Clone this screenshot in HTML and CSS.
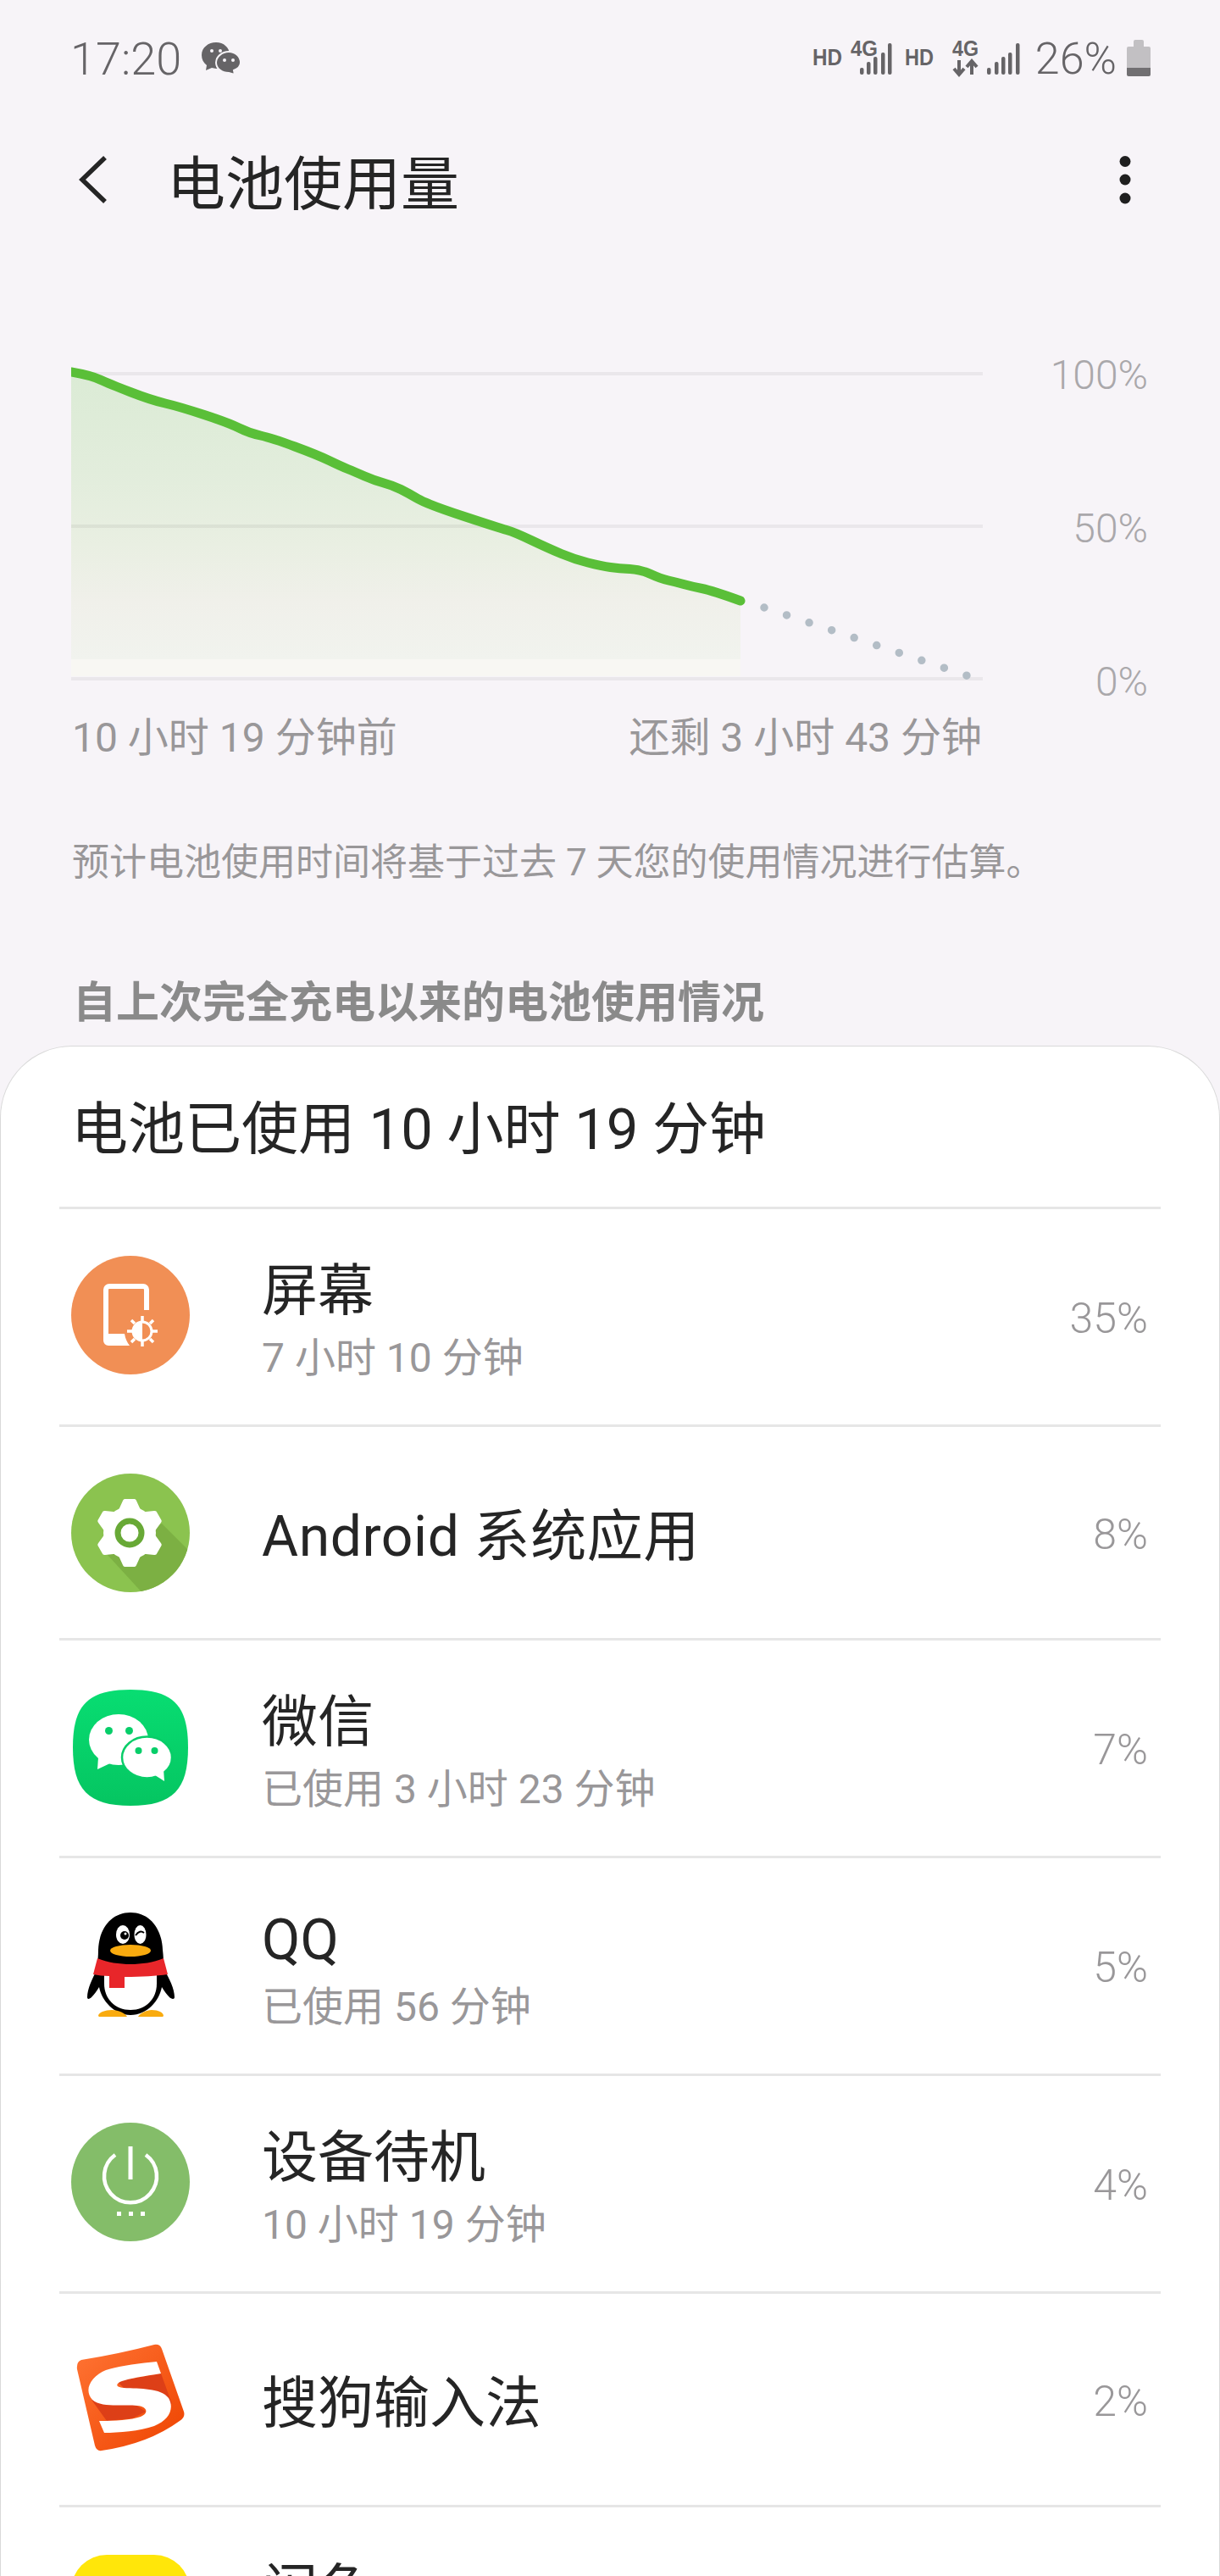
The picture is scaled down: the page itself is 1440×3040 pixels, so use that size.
FILE: index.html
```html
<!DOCTYPE html>
<html lang="zh-CN">
<head>
    <meta charset="utf-8">
    <meta name="viewport" content="width=device-width, initial-scale=1.0">
    <title>电池使用量</title>
    <link rel="stylesheet" href="styles.css">
</head>
<body>

<div class="screen">

    <div class="status">
        <span class="time">17:20</span>
        <svg class="status-wechat" viewBox="0 0 47 38">
            <path class="glyph" d="M17 0C8 0 0 6 0 15c0 5 2 9 6 12l-1 6 7-3 5 1C26 31 33 24 33 15 33 6 26 0 17 0Z"/>
            <path class="glyph" stroke="#f7f4f8" stroke-width="2" d="M32 11c-8 0-15 6-15 13s7 12 15 12l7 2-1-5c5-2 8-5 8-9 0-7-6-13-14-13Z"/>
            <circle class="eye" cx="12" cy="10" r="2"/><circle class="eye" cx="22" cy="10" r="2"/>
            <circle class="eye" cx="27" cy="21" r="2"/><circle class="eye" cx="37" cy="21" r="2"/>
        </svg>
        <svg class="net" viewBox="955 36 252 56">
            <text class="net-hd" x="959" y="77" textLength="35" lengthAdjust="spacingAndGlyphs">HD</text>
            <text class="net-4g" x="1004" y="66" textLength="32" lengthAdjust="spacingAndGlyphs">4G</text>
            <g class="bars">
                <rect x="1015" y="80" width="4.5" height="8" rx="2"/>
                <rect x="1023" y="73" width="4.5" height="15" rx="2"/>
                <rect x="1031" y="67" width="4.5" height="21" rx="2"/>
                <rect x="1040" y="62" width="4.5" height="26" rx="2"/>
                <rect x="1048" y="51" width="4.5" height="37" rx="2"/>
            </g>
            <text class="net-hd" x="1068" y="77" textLength="34" lengthAdjust="spacingAndGlyphs">HD</text>
            <text class="net-4g" x="1124" y="66" textLength="31" lengthAdjust="spacingAndGlyphs">4G</text>
            <path class="arrows" d="M1132 71V87M1126 81l6 7 6-7M1147 88V73M1141 79l6-7 6 7"/>
            <g class="bars">
                <rect x="1165" y="80" width="4.5" height="8" rx="2"/>
                <rect x="1174" y="73" width="4.5" height="15" rx="2"/>
                <rect x="1182" y="67" width="4.5" height="21" rx="2"/>
                <rect x="1190" y="62" width="4.5" height="26" rx="2"/>
                <rect x="1199" y="51" width="4.5" height="37" rx="2"/>
            </g>
        </svg>
        <span class="level">26%</span>
        <svg class="battery" viewBox="0 0 28 43">
            <path fill="#c2c0c3" d="M8 2a2 2 0 0 1 2-2h8a2 2 0 0 1 2 2v6h6a2 2 0 0 1 2 2v24H0V10a2 2 0 0 1 2-2h6Z"/>
            <path fill="#716f72" d="M0 33h28v8a2 2 0 0 1-2 2H2a2 2 0 0 1-2-2Z"/>
        </svg>
    </div>

    <div class="toolbar">
        <svg class="back" viewBox="0 0 36 58"><path d="M32 3 5 29l27 26"/></svg>
        <h1 class="page-title">电池使用量</h1>
        <svg class="more" viewBox="0 0 14 57">
            <ellipse cx="7" cy="6.500" rx="6.500" ry="6.500"/>
            <ellipse cx="7" cy="28" rx="6.500" ry="6.500"/>
            <ellipse cx="7" cy="50" rx="6.500" ry="6.500"/>
        </svg>
    </div>

    <div class="chart">
        <svg class="chart-plot" viewBox="84 420 1076 400">
            <defs>
                <linearGradient id="chartFill" gradientUnits="userSpaceOnUse" x1="0" y1="439" x2="0" y2="778">
                    <stop offset="0" stop-color="#dbebd5"/>
                    <stop offset="0.35" stop-color="#e2eddc"/>
                    <stop offset="0.6" stop-color="#e9efe2"/>
                    <stop offset="0.8" stop-color="#f0f0ea"/>
                    <stop offset="1" stop-color="#f1f3ee"/>
                </linearGradient>
            </defs>
            <rect x="84" y="778" width="790" height="20" fill="#f8f7f3"/>
            <path fill="url(#chartFill)" d="M84 439Q107 443 118 448Q129 453 153.500 462.500Q178 472 195 476Q212 480 241 489.500Q270 499 282 505Q294 511 307.500 514Q321 517 348 527Q375 537 388.500 543.500Q402 550 410.500 553.500Q419 557 430.500 562Q442 567 453 570Q464 573 473 577.500Q482 582 493 588.500Q504 595 546.500 609Q589 623 598 625.500Q607 628 627 637.500Q647 647 662.500 653.500Q678 660 694 664Q710 668 720.500 669.500Q731 671 743.500 671.500Q756 672 768 677.500Q780 683 789 685Q798 687 807 689.500Q816 692 828.500 694.500Q841 697 874 709V778H84Z"/>
            <path class="grid" d="M84 441H1160M84 621H1160M84 801H1160"/>
            <path class="forecast" d="M902 717L1142 797.500"/>
            <path class="usage" d="M84 439Q107 443 118 448Q129 453 153.500 462.500Q178 472 195 476Q212 480 241 489.500Q270 499 282 505Q294 511 307.500 514Q321 517 348 527Q375 537 388.500 543.500Q402 550 410.500 553.500Q419 557 430.500 562Q442 567 453 570Q464 573 473 577.500Q482 582 493 588.500Q504 595 546.500 609Q589 623 598 625.500Q607 628 627 637.500Q647 647 662.500 653.500Q678 660 694 664Q710 668 720.500 669.500Q731 671 743.500 671.500Q756 672 768 677.500Q780 683 789 685Q798 687 807 689.500Q816 692 828.500 694.500Q841 697 874 709"/>
        </svg>
        <div class="chart-scale">
            <span>100%</span>
            <span>50%</span>
            <span>0%</span>
        </div>
    </div>

    <div class="chart-times">
        <span>10 小时 19 分钟前</span>
        <span>还剩 3 小时 43 分钟</span>
    </div>

    <p class="note">预计电池使用时间将基于过去 7 天您的使用情况进行估算。</p>
    <h2 class="section-title">自上次完全充电以来的电池使用情况</h2>

    <div class="card">
        <div class="card-title">电池已使用 10 小时 19 分钟</div>

        <div class="row">
            <svg class="app-icon" viewBox="0 0 140 140">
                <circle cx="70" cy="70" r="70" fill="#f18f55"/>
                <path fill="none" stroke="#fff" stroke-width="6" d="M89 64V40a4 4 0 0 0-4-4H45a4 4 0 0 0-4 4v60"/>
                <path fill="#fff" d="M38 92h25c1 6 3 10 6 14H44a6 6 0 0 1-6-6Z"/>
                <circle cx="84" cy="89" r="11" fill="none" stroke="#fff" stroke-width="3"/>
                <path fill="#fff" d="M84 78a11 11 0 0 0 0 22Z"/>
                <path fill="none" stroke="#fff" stroke-width="3.500" d="M84 71v6M84 101v6M66 89h6M96 89h6M71 76l4 4M93 98l4 4M97 76l-4 4M75 98l-4 4"/>
            </svg>
            <div class="row-text">
                <div class="row-title">屏幕</div>
                <div class="row-sub">7 小时 10 分钟</div>
            </div>
            <span class="row-pct">35%</span>
        </div>

        <div class="row row-single">
            <svg class="app-icon" viewBox="0 -3 140 140">
                <defs><clipPath id="gearClip"><circle cx="70" cy="70" r="70"/></clipPath></defs>
                <circle cx="70" cy="70" r="70" fill="#8bc34f"/>
                <polygon clip-path="url(#gearClip)" fill="#7cb043" points="42,95 107,59 150,102 97,155"/>
                <g transform="translate(69 70)" fill="#fff">
                    <circle r="31"/>
                    <path d="M-13-27-8-38a3 3 0 0 1 2-2H6a3 3 0 0 1 2 2L13-27Z"/>
                    <path transform="rotate(60)" d="M-13-27-8-38a3 3 0 0 1 2-2H6a3 3 0 0 1 2 2L13-27Z"/>
                    <path transform="rotate(120)" d="M-13-27-8-38a3 3 0 0 1 2-2H6a3 3 0 0 1 2 2L13-27Z"/>
                    <path transform="rotate(180)" d="M-13-27-8-38a3 3 0 0 1 2-2H6a3 3 0 0 1 2 2L13-27Z"/>
                    <path transform="rotate(240)" d="M-13-27-8-38a3 3 0 0 1 2-2H6a3 3 0 0 1 2 2L13-27Z"/>
                    <path transform="rotate(300)" d="M-13-27-8-38a3 3 0 0 1 2-2H6a3 3 0 0 1 2 2L13-27Z"/>
                    <circle r="14" fill="none" stroke="#68a936" stroke-width="7"/>
                </g>
            </svg>
            <div class="row-text">
                <div class="row-title row-title-latin">Android 系统应用</div>
            </div>
            <span class="row-pct">8%</span>
        </div>

        <div class="row">
            <svg class="app-icon" viewBox="-2 -3 140 140">
                <defs>
                    <linearGradient id="wechatBg" x1="0" y1="0" x2="0" y2="1">
                        <stop offset="0" stop-color="#08dd72"/>
                        <stop offset="1" stop-color="#05c561"/>
                    </linearGradient>
                </defs>
                <path fill="url(#wechatBg)" d="M68 0C118 0 136 18 136 68 136 118 118 137 68 137 18 137 0 118 0 68 0 18 18 0 68 0Z"/>
                <ellipse cx="54" cy="59" rx="35" ry="30" fill="#fff"/>
                <path fill="#fff" d="M30 80l-1 14 17-8Z"/>
                <circle cx="42.500" cy="48.500" r="4.500" fill="#07ce69"/>
                <circle cx="66.500" cy="48.500" r="4.500" fill="#07ce69"/>
                <ellipse cx="87.500" cy="80" rx="29.500" ry="24.500" fill="#fff" stroke="#07cd68" stroke-width="2.500"/>
                <path fill="#fff" d="M97 101l11 7-1-14Z"/>
                <circle cx="77.500" cy="72" r="4" fill="#07ce69"/>
                <circle cx="96.500" cy="72" r="4" fill="#07ce69"/>
            </svg>
            <div class="row-text">
                <div class="row-title">微信</div>
                <div class="row-sub">已使用 3 小时 23 分钟</div>
            </div>
            <span class="row-pct">7%</span>
        </div>

        <div class="row">
            <svg class="app-icon" viewBox="-18 -9 140 140">
                <path fill="#000" d="M52 0C30 0 15 18 14 44c0 8-1 14-1 22C7 78 1 90 1 100c0 3 3 2 5 0 3-3 6-7 9-12 3 16 18 33 37 33 20 0 34-17 37-33 3 5 6 9 9 12 2 2 6 3 6 0 0-10-6-22-13-34 0-8 0-14-1-22C89 18 74 0 52 0Z"/>
                <path fill="#fff" d="M21 72h62v12c0 18-13 31-31 31S21 102 21 84Z"/>
                <path fill="#e8262a" d="M13 54c12 5 26 7 39 7s27-2 39-7l5 19c-14 2-30 3-51 3v13H27V75c-7 0-13-1-19-2Z"/>
                <ellipse cx="52" cy="45" rx="24" ry="7" fill="#f9ab0f"/>
                <path fill="#f9ab0f" d="M14 122c0-4 8-7 16-7s16 4 18 8H18c-2 0-4 0-4-1ZM61 123c2-4 10-8 16-8 8 0 14 3 14 7 0 1-2 1-4 1Z"/>
                <ellipse cx="43" cy="26" rx="8" ry="11" fill="#fff"/>
                <circle cx="45" cy="27" r="5" fill="#000"/>
                <circle cx="46" cy="25" r="1.500" fill="#fff"/>
                <ellipse cx="63.500" cy="26" rx="7" ry="11" fill="#fff"/>
                <path fill="none" stroke="#000" stroke-width="2" d="M58 27Q63 20 68 24"/>
            </svg>
            <div class="row-text">
                <div class="row-title">QQ</div>
                <div class="row-sub">已使用 56 分钟</div>
            </div>
            <span class="row-pct">5%</span>
        </div>

        <div class="row">
            <svg class="app-icon" viewBox="0 0 140 140">
                <circle cx="70" cy="70" r="70" fill="#84bd69"/>
                <path fill="none" stroke="#fff" stroke-width="4.500" d="M52 38a31 31 0 1 0 36 0"/>
                <rect x="67.500" y="28" width="5" height="39" fill="#fff"/>
                <rect x="54" y="105" width="5" height="5" fill="#fff"/>
                <rect x="68" y="105" width="5" height="5" fill="#fff"/>
                <rect x="82" y="105" width="5" height="5" fill="#fff"/>
            </svg>
            <div class="row-text">
                <div class="row-title">设备待机</div>
                <div class="row-sub">10 小时 19 分钟</div>
            </div>
            <span class="row-pct">4%</span>
        </div>

        <div class="row row-single">
            <svg class="app-icon" viewBox="-6 -7 140 140">
                <defs>
                    <linearGradient id="sogouBg" x1="0" y1="0" x2="1" y2="1">
                        <stop offset="0" stop-color="#ff7434"/>
                        <stop offset="1" stop-color="#ee4300"/>
                    </linearGradient>
                </defs>
                <path fill="url(#sogouBg)" d="M6 19Q50 12 92 1 99 0 101 6L127 80Q129 87 122 91 85 118 30 126 24 127 22 120L1 30Q0 21 6 19Z"/>
                <path fill="#dd3f17" d="M48 44 100 35 113 71 94 60 60 56ZM18 66 70 72 82 80 66 88 36 91Z"/>
                <path fill="#fff" d="M95 21 100 35C80 38 62 41 54 44 46 47 46 51 56 52 75 53 100 52 109 64 116 76 110 90 92 97 75 103 50 105 33 105L27 91C45 91 65 90 76 86 86 82 84 74 72 73 55 71 30 76 19 66 8 54 18 38 35 31 50 26 75 23 95 21Z"/>
            </svg>
            <div class="row-text">
                <div class="row-title">搜狗输入法</div>
            </div>
            <span class="row-pct">2%</span>
        </div>

        <div class="row row-last">
            <div class="app-icon app-icon-yellow"></div>
            <div class="row-text">
                <div class="row-title">闲鱼</div>
                <div class="row-sub"></div>
            </div>
        </div>
    </div>

</div>

</body>
</html>
```
FILE: styles.css
```css
* {
    margin: 0;
    padding: 0;
    box-sizing: border-box;
}
body {
    background: #f7f4f8;
    font-family: Roboto, "Noto Sans CJK SC", sans-serif;
}
.screen {
    width: 1440px;
    height: 3040px;
    overflow: hidden;
}

/* status bar */
.status {
    display: flex;
    align-items: center;
    height: 140px;
    padding: 0 82px 0 83px;
    color: #666467;
}
.time {
    font-size: 54px;
    font-weight: 300;
    line-height: 60px;
}
.status-wechat {
    width: 47px;
    height: 38px;
    margin-left: 24px;
    margin-top: -2px;
}
.glyph {
    fill: #666467;
}
.eye {
    fill: #f7f4f8;
}
.net {
    width: 252px;
    height: 56px;
    margin-left: auto;
    margin-right: 15px;
    margin-top: -12px;
}
.net-hd,
.net-4g {
    fill: #666467;
    font-family: "Liberation Sans", sans-serif;
    font-weight: bold;
}
.net-hd {
    font-size: 28px;
}
.net-4g {
    font-size: 26px;
}
.bars {
    fill: #666467;
}
.arrows {
    fill: none;
    stroke: #666467;
    stroke-width: 4;
}
.level {
    font-size: 52px;
    font-weight: 300;
    line-height: 60px;
}
.battery {
    width: 28px;
    height: 43px;
    margin-left: 12px;
    margin-top: -4px;
}

/* toolbar */
.toolbar {
    display: flex;
    align-items: center;
    height: 144px;
    padding: 0 105px 0 92px;
}
.back {
    width: 36px;
    height: 58px;
    fill: none;
    stroke: #252525;
    stroke-width: 5.500;
}
.page-title {
    font-size: 69px;
    font-weight: 400;
    color: #252525;
    margin-left: 69px;
}
.more {
    width: 14px;
    height: 57px;
    margin-left: auto;
    fill: #1f1f1f;
}

/* chart */
.chart {
    display: flex;
    padding: 136px 85px 0 84px;
    justify-content: space-between;
}
.chart-plot {
    display: block;
    width: 1076px;
    height: 400px;
}
.chart-scale {
    display: flex;
    flex-direction: column;
    justify-content: space-between;
    align-items: flex-end;
    height: 422px;
    margin-top: -7px;
    font-size: 48px;
    font-weight: 300;
    line-height: 60px;
    color: #aaa8ab;
}
.grid {
    fill: none;
    stroke: rgba(0, 0, 0, 0.05);
    stroke-width: 4;
}
.usage {
    fill: none;
    stroke: #5abf38;
    stroke-width: 11;
    stroke-linejoin: round;
    stroke-linecap: round;
}
.forecast {
    fill: none;
    stroke: #b3bdc6;
    stroke-width: 9.500;
    stroke-linecap: round;
    stroke-dasharray: 0 28;
}
.chart-times {
    display: flex;
    justify-content: space-between;
    width: 1074px;
    margin: 6px 0 0 85px;
    font-size: 48px;
    line-height: 60px;
    color: #999799;
}
.note {
    margin: 87px 0 0 85px;
    font-size: 44px;
    line-height: 60px;
    color: #999799;
}
.section-title {
    margin: 106px 0 0 86px;
    font-size: 51px;
    font-weight: 700;
    line-height: 60px;
    color: #8a8a8a;
}

/* usage list */
.card {
    margin-top: 20px;
    padding: 0 69px;
    background: #fff;
    border: 1px solid #d9d9d9;
    border-bottom: none;
    border-radius: 85px 85px 0 0;
}
.card-title {
    height: 192px;
    padding: 53px 0 0 14px;
    font-size: 67px;
    line-height: 90px;
    color: #252525;
    border-bottom: 3px solid #e6e6e6;
}
.row {
    display: flex;
    align-items: center;
    height: 257px;
    padding: 0 15px 0 14px;
    border-bottom: 3px solid #e6e6e6;
}
.row-single {
    height: 252px;
}
.row-last {
    border-bottom: none;
}
.app-icon {
    flex: none;
    width: 140px;
    height: 140px;
    margin-bottom: 5px;
    overflow: visible;
}
.app-icon-yellow {
    background: #ffe60a;
    border-radius: 42px;
}
.row-text {
    flex: 1;
    margin-left: 85px;
    padding-top: 10px;
}
.row-title {
    font-size: 66px;
    line-height: 88px;
    color: #252525;
}
.row-title-latin {
    letter-spacing: 0.6px;
}
.row-sub {
    min-height: 70px;
    font-size: 48px;
    line-height: 70px;
    color: #999799;
}
.row-pct {
    padding-top: 4px;
    font-size: 50px;
    font-weight: 300;
    color: #999799;
}
```
